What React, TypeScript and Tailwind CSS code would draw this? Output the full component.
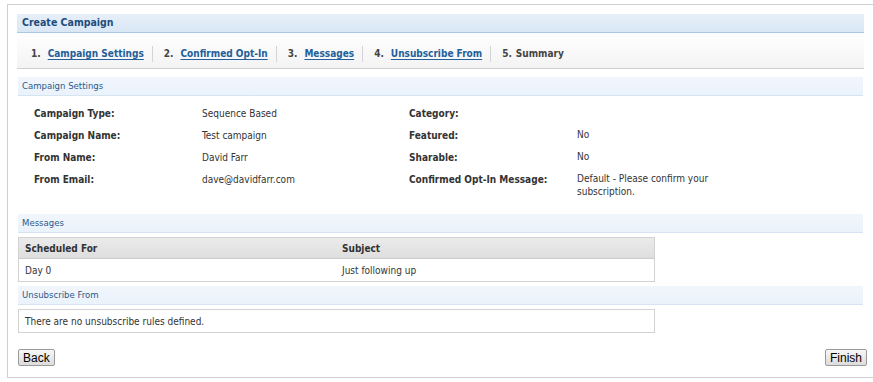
import React from "react"

const font = { fontFamily: '"DejaVu Sans Condensed", "DejaVu Sans", Verdana, sans-serif' }

function SectionHeader({ title }: { title: string }) {
  return (
    <div className="mx-[10px] h-[19px] bg-gradient-to-b from-[#f1f6fc] to-[#eaf2fb] border-b border-[#d6e4f2] flex items-center pl-[4px] text-[9.5px] text-[#285a8c]">
      {title}
    </div>
  )
}

function Step({ n, label, link, last }: { n: number; label: string; link?: boolean; last?: boolean }) {
  return (
    <div className="flex items-center">
      <span className="font-bold text-[#444] text-[10px]">{n}.</span>
      <span
        className={
          link
            ? "ml-[7px] font-bold text-[10px] text-[#23609b] underline underline-offset-2"
            : "ml-[4px] font-bold text-[10px] text-[#444]"
        }
      >
        {label}
      </span>
      {!last && <span className="ml-[8px] mr-[11px] h-[16px] w-px bg-[#d4d4d4]" />}
    </div>
  )
}

const rows = [
  ["Campaign Type:", "Sequence Based", "Category:", ""],
  ["Campaign Name:", "Test campaign", "Featured:", "No"],
  ["From Name:", "David Farr", "Sharable:", "No"],
  ["From Email:", "dave@davidfarr.com", "Confirmed Opt-In Message:", "Default - Please confirm your subscription."],
]

export default function App() {
  return (
    <div className="w-[873px] h-[382px] bg-white pt-[4px] pl-[7px]" style={font}>
      <div className="h-[374px] border-l border-t border-b border-[#cfcfcf] pt-[9px] flex flex-col">
        <div className="mx-[9px] h-[19px] bg-gradient-to-b from-[#e6eff9] to-[#d9e7f5] border-b border-[#a9c7e6] flex items-center pl-[5px] text-[10.5px] font-bold text-[#1f4c7c]">
          Create Campaign
        </div>
        <div className="mx-[9px] h-[36px] bg-gradient-to-b from-white to-[#f3f3f3] border-b border-[#d0d0d0] flex items-center pl-[14px] pt-[6px]">
          <Step n={1} label="Campaign Settings" link />
          <Step n={2} label="Confirmed Opt-In" link />
          <Step n={3} label="Messages" link />
          <Step n={4} label="Unsubscribe From" link />
          <Step n={5} label="Summary" last />
        </div>

        <div className="mt-[8px]">
          <SectionHeader title="Campaign Settings" />
        </div>
        <div className="pl-[26px] pt-[7px] text-[10px] text-[#333]">
          {rows.map((r, i) => (
            <div key={i} className="flex h-[22px] items-start pt-[3px]">
              <div className="w-[168px] font-bold">{r[0]}</div>
              <div className="w-[207px]">{r[1]}</div>
              <div className="w-[168px] font-bold">{r[2]}</div>
              <div className="w-[150px] leading-[13px]">{r[3]}</div>
            </div>
          ))}
        </div>

        <div className="mt-[23px]">
          <SectionHeader title="Messages" />
        </div>
        <div className="mx-[10px] mt-[4px] w-[637px] border border-[#d2d2d2] text-[10px] text-[#333]">
          <div className="h-[21px] bg-gradient-to-b from-[#ebebeb] to-[#dedede] border-b border-[#cccccc] flex items-center font-bold">
            <div className="w-[323px] pl-[6px]">Scheduled For</div>
            <div>Subject</div>
          </div>
          <div className="h-[22px] flex items-center">
            <div className="w-[323px] pl-[6px]">Day 0</div>
            <div>Just following up</div>
          </div>
        </div>

        <div className="mt-[4px]">
          <SectionHeader title="Unsubscribe From" />
        </div>
        <div className="mx-[10px] mt-[4px] w-[637px] h-[24px] border border-[#d2d2d2] flex items-center pl-[6px] text-[10px] text-[#333]">
          There are no unsubscribe rules defined.
        </div>

        <div className="mx-[10px] mt-[16px] flex justify-between w-[849px]" style={{ fontFamily: '"Liberation Sans", Arial, sans-serif' }}>
          <button className="h-[17px] px-[4px] text-[12px] leading-none text-black border border-[#9a9a9a] rounded-[2px] bg-gradient-to-b from-[#f7f7f7] to-[#dcdcdc]">
            Back
          </button>
          <button className="h-[17px] px-[4px] text-[12px] leading-none text-black border border-[#9a9a9a] rounded-[2px] bg-gradient-to-b from-[#f7f7f7] to-[#dcdcdc]">
            Finish
          </button>
        </div>
      </div>
    </div>
  )
}
